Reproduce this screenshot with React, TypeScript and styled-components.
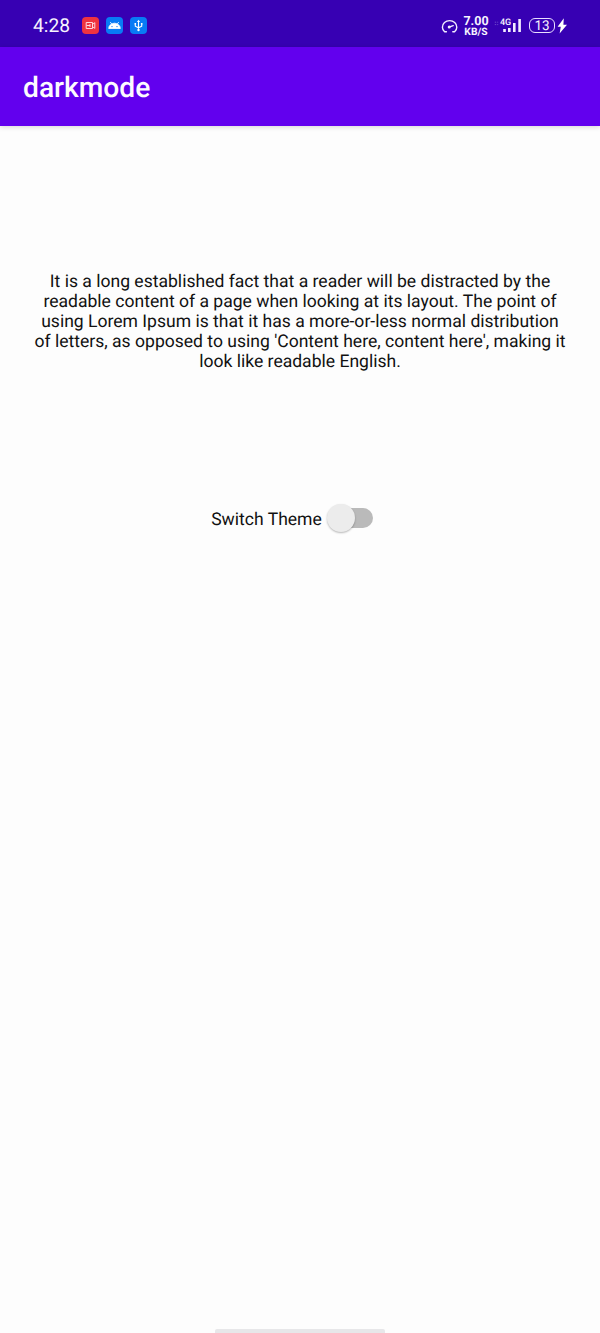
import React from "react";
import styled, { createGlobalStyle } from "styled-components";

const GlobalStyle = createGlobalStyle`
  * { box-sizing: border-box; }
  body {
    margin: 0;
    background: #fdfdfd;
    font-family: Roboto, "Noto Sans", sans-serif;
    text-rendering: geometricPrecision;
  }
`;

const Screen = styled.div`
  display: flex;
  flex-direction: column;
  height: 1333px;
  overflow: hidden;
  background: #fdfdfd;
  color: #111;
`;

const StatusBar = styled.header`
  display: flex;
  align-items: center;
  height: 47px;
  padding: 4px 32px 0;
  background: #3700b3;
  color: #f8f4ff;
`;

const Clock = styled.time`
  width: 50px;
  padding-left: 1px;
  font-size: 19.2px;
  line-height: 25px;
`;

const AppBadges = styled.div`
  display: flex;
  gap: 7px;
`;

const Badge = styled.span<{ $color: string }>`
  display: flex;
  width: 17px;
  height: 17px;
  border-radius: 4px;
  background: ${(p) => p.$color};
`;

const Indicators = styled.div`
  display: flex;
  align-items: center;
  margin-left: auto;
`;

const Speed = styled.div`
  display: flex;
  flex-direction: column;
  align-items: center;
  width: 26px;
  margin: 0 5px 0 5px;
  padding-top: 2px;
  font-weight: 700;
  white-space: nowrap;
`;

const SpeedValue = styled.span`
  font-size: 12.5px;
  line-height: 10px;
`;

const SpeedUnit = styled.span`
  font-size: 10.3px;
  line-height: 9px;
`;

const Signal = styled.div`
  display: flex;
  align-items: flex-end;
  width: 28px;
  height: 15px;
  margin-right: 7px;
`;

const RoamingMark = styled.svg`
  flex: none;
  align-self: flex-start;
  margin-top: 3px;
`;

const Network = styled.span`
  align-self: flex-start;
  width: 11px;
  margin-left: 1px;
  font-size: 9px;
  font-weight: 500;
  line-height: 10px;
`;

const Bars = styled.svg`
  flex: none;
  margin-left: -9px;
`;

const Battery = styled.div`
  display: flex;
  align-items: center;
  justify-content: center;
  width: 26px;
  height: 15px;
  padding-top: 1px;
  border: 1.5px solid #e9dfff;
  border-radius: 6px;
  font-size: 13.5px;
  line-height: 13px;
`;

const AppBar = styled.div`
  display: flex;
  align-items: center;
  height: 79px;
  padding: 2px 23px 0;
  background: #6200ee;
  box-shadow: 0 1px 5px rgba(0, 0, 0, 0.16);
`;

const Title = styled.h1`
  margin: 0;
  color: #fdfaff;
  font-size: 28.2px;
  font-weight: 500;
  line-height: 34px;
`;

const Content = styled.main`
  display: flex;
  flex: 1;
  flex-direction: column;
  align-items: center;
  padding-top: 146px;
`;

const Passage = styled.p`
  margin: 0;
  font-size: 17.56px;
  line-height: 20px;
  text-align: center;
  white-space: pre-line;
`;

const ThemeRow = styled.label`
  display: flex;
  align-items: center;
  height: 32px;
  margin: 130px 16px 0 0;
  font-size: 17.56px;
`;

const ThemeLabel = styled.span`
  padding-top: 3px;
  line-height: 20px;
`;

const Track = styled.span`
  display: flex;
  align-items: center;
  width: 42px;
  height: 20px;
  margin-left: 9px;
  border-radius: 10px;
  background: #bababa;
`;

const Thumb = styled.span`
  flex: none;
  width: 28px;
  height: 28px;
  margin-left: -4px;
  border-radius: 50%;
  background: #ececec;
  box-shadow: 0 1px 2px rgba(0, 0, 0, 0.28);
`;

const HomeIndicator = styled.div`
  align-self: center;
  width: 170px;
  height: 4px;
  border-radius: 2px 2px 0 0;
  background: #e7e7e9;
`;

const passage = `It is a long established fact that a reader will be distracted by the
readable content of a page when looking at its layout. The point of
using Lorem Ipsum is that it has a more-or-less normal distribution
of letters, as opposed to using 'Content here, content here', making it
look like readable English.`;

export default function App() {
  return (
    <Screen>
      <GlobalStyle />
      <StatusBar>
        <Clock>4:28</Clock>
        <AppBadges>
          <Badge $color="#ef3340">
            <svg width="17" height="17" viewBox="0 0 17 17" fill="none" stroke="#ffd5dc" strokeWidth="1">
              <path d="M4.2 5.5h6.3v6H4.2zM4.5 8.5h3.5M8 7v3M12.8 5.5v6M10.5 7.2l2.3-1.3M10.5 9.8l2.3 1.4" />
            </svg>
          </Badge>
          <Badge $color="#087bf5">
            <svg width="17" height="17" viewBox="0 0 17 17">
              <path d="M2.7 11.5a5.8 5.3 0 0 1 11.6 0zM4.2 5l2 2.5M12.8 5l-2 2.5" fill="#fff" stroke="#fff" strokeWidth=".8" />
              <circle cx="6" cy="9.6" r=".7" fill="#087bf5" />
              <circle cx="11" cy="9.6" r=".7" fill="#087bf5" />
            </svg>
          </Badge>
          <Badge $color="#087bf5">
            <svg width="17" height="17" viewBox="0 0 17 17" fill="none" stroke="#fff" strokeWidth="1.1">
              <path d="M8.5 4v9M5.3 7v2.2l3.2 1.6 3.2-1.6V7" />
              <path d="M8.5 2.7L6.9 5h3.2zM4.5 6h1.6v1.6H4.5zM10.9 6h1.6v1.6h-1.6z" fill="#fff" stroke="none" />
              <circle cx="8.5" cy="13" r="1.2" fill="#fff" stroke="none" />
            </svg>
          </Badge>
        </AppBadges>
        <Indicators>
          <svg width="17" height="17" viewBox="0 0 17 17" fill="none" stroke="#f3edff" strokeWidth="1.4" strokeLinecap="round">
            <path d="M3.6 14.8a7.2 6.5 0 1 1 10 0M3.6 14.8h1.8M13.6 14.8h-1.8M8 10.2L12.2 8.6" />
            <circle cx="8.2" cy="10" r=".8" fill="#f3edff" />
          </svg>
          <Speed>
            <SpeedValue>7.00</SpeedValue>
            <SpeedUnit>KB/S</SpeedUnit>
          </Speed>
          <Signal>
            <RoamingMark width="5" height="5" viewBox="0 0 5 5" fill="none" stroke="#7a55cf" strokeWidth="0.8">
              <path d="M.8 1.2h1.4M3.2 1.2h1M.8 3.6h1.4M3.2 3.6h1" />
            </RoamingMark>
            <Network>4G</Network>
            <Bars width="20" height="15" viewBox="0 0 20 15" fill="#f3edff">
              <path d="M1.2 11h2.6v3H1.2zM6 10h2.6v4H6zM11 5h2.6v9H11zM16.3 1h2.6v13h-2.6z" />
            </Bars>
          </Signal>
          <Battery>13</Battery>
          <svg width="13" height="18" viewBox="0 0 13 18" fill="#fff">
            <path d="M8.8 1.2L2.6 9.8h3.2L4.6 16.4 12 7.8H8.4z" />
          </svg>
        </Indicators>
      </StatusBar>
      <AppBar>
        <Title>darkmode</Title>
      </AppBar>
      <Content>
        <Passage>{passage}</Passage>
        <ThemeRow>
          <ThemeLabel>Switch Theme</ThemeLabel>
          <Track role="switch" aria-checked="false">
            <Thumb />
          </Track>
        </ThemeRow>
      </Content>
      <HomeIndicator />
    </Screen>
  );
}
